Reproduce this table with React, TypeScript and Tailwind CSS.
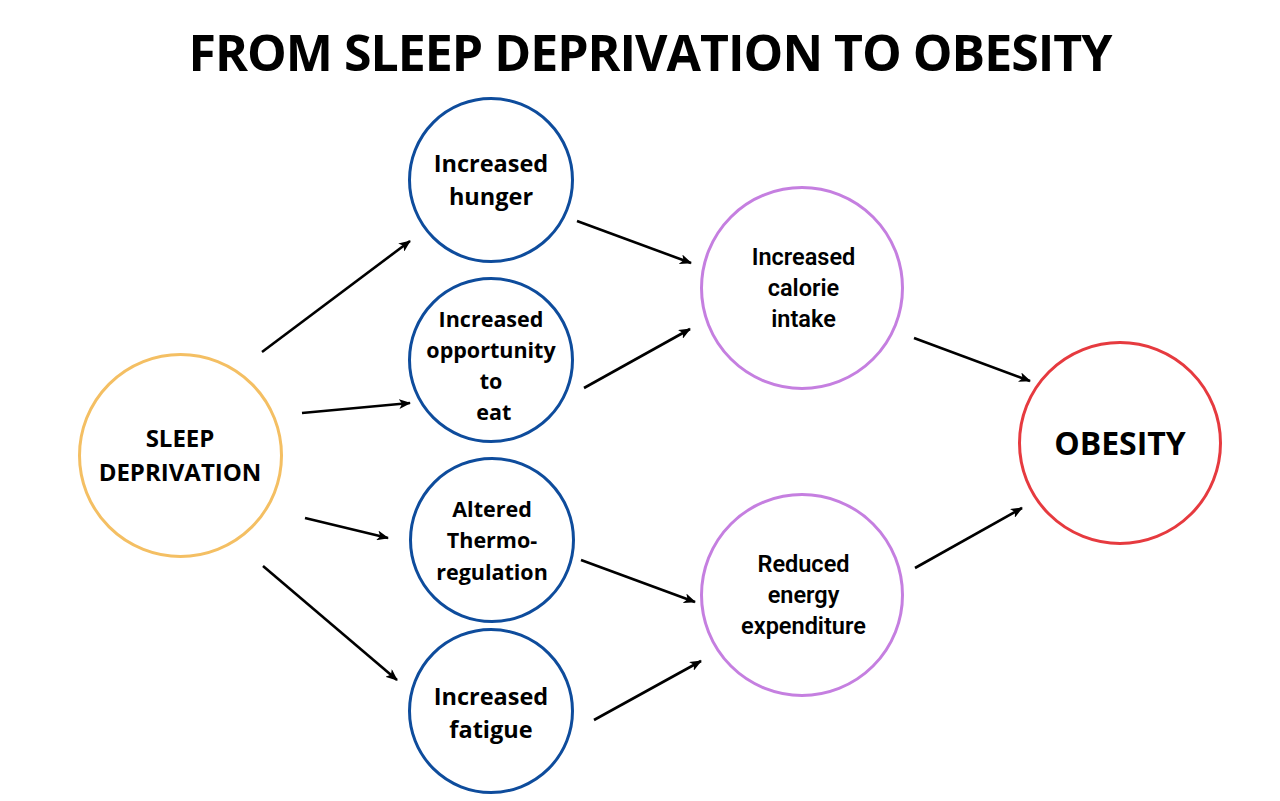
type Node = {
  id: string;
  lines: string[];
  cx: number;
  cy: number;
  d: number;
  ring: string;
  text: string;
};

const nodes: Node[] = [
  { id: 'sleep', lines: ['SLEEP', 'DEPRIVATION'], cx: 180, cy: 455, d: 205, ring: 'border-[#F4BF63]', text: "font-['Open_Sans'] text-[24px] font-bold leading-[34px]" },
  { id: 'hunger', lines: ['Increased', 'hunger'], cx: 491, cy: 180, d: 166, ring: 'border-[#0E4C9C]', text: "font-['Open_Sans'] text-[23.5px] font-bold leading-[33px]" },
  { id: 'opportunity', lines: ['Increased', 'opportunity', 'to', '\u00a0eat'], cx: 491, cy: 360, d: 166, ring: 'border-[#0E4C9C]', text: "mt-[10px] font-['Open_Sans'] text-[21.5px] font-bold leading-[31px]" },
  { id: 'thermo', lines: ['Altered', 'Thermo-', 'regulation'], cx: 492, cy: 540, d: 166, ring: 'border-[#0E4C9C]', text: "font-['Open_Sans'] text-[21.5px] font-bold leading-[31.5px]" },
  { id: 'fatigue', lines: ['Increased', 'fatigue'], cx: 491, cy: 711, d: 166, ring: 'border-[#0E4C9C]', text: "mt-[4px] font-['Open_Sans'] text-[23.5px] font-bold leading-[33px]" },
  { id: 'calorie', lines: ['Increased', 'calorie', 'intake'], cx: 802, cy: 288, d: 204, ring: 'border-[#C57FE0]', text: "ml-[3px] font-['Roboto'] text-[23.5px] font-semibold leading-[31px]" },
  { id: 'energy', lines: ['Reduced', 'energy', 'expenditure'], cx: 802, cy: 595, d: 204, ring: 'border-[#C57FE0]', text: "ml-[3px] font-['Roboto'] text-[23.5px] font-semibold leading-[31px]" },
  { id: 'obesity', lines: ['OBESITY'], cx: 1120, cy: 443, d: 204, ring: 'border-[#E63A3F]', text: "font-['Open_Sans'] text-[32px] font-bold leading-[38px]" },
];

const arrows: [number, number, number, number][] = [
  [262, 352, 410, 241],
  [302, 413, 410, 403],
  [305, 518, 388, 538],
  [263, 566, 397, 680],
  [577, 221, 691, 263],
  [584, 388, 690, 329],
  [581, 560, 695, 602],
  [594, 720, 701, 661],
  [914, 338, 1030, 381],
  [915, 568, 1022, 508],
];

export default function App() {
  return (
    <div className="relative h-[801px] w-[1280px] overflow-hidden bg-white text-black">
      <h1 className="pl-5 pt-[27px] text-center font-['Open_Sans',sans-serif] text-[50px] font-bold leading-[50px] tracking-[-1px]">
        FROM SLEEP DEPRIVATION TO OBESITY
      </h1>

      <svg className="absolute inset-0" width="1280" height="801" viewBox="0 0 1280 801" aria-hidden="true">
        <defs>
          <marker id="head" viewBox="0 0 12 10" refX="11" refY="5" markerWidth="12" markerHeight="10" markerUnits="userSpaceOnUse" orient="auto">
            <path d="M0 0 L12 5 L0 10 L3 5 Z" fill="#000" />
          </marker>
        </defs>
        {arrows.map(([x1, y1, x2, y2], i) => (
          <line key={i} x1={x1} y1={y1} x2={x2} y2={y2} stroke="#000" strokeWidth="2.6" markerEnd="url(#head)" />
        ))}
      </svg>

      {nodes.map((n) => (
        <div
          key={n.id}
          className={`absolute flex items-center justify-center rounded-full border-[3.5px] bg-white text-center ${n.ring}`}
          style={{ left: n.cx - n.d / 2, top: n.cy - n.d / 2, width: n.d, height: n.d }}
        >
          <div className={n.text}>
            {n.lines.map((l) => (
              <div key={l} className="whitespace-pre">{l}</div>
            ))}
          </div>
        </div>
      ))}
    </div>
  );
}
